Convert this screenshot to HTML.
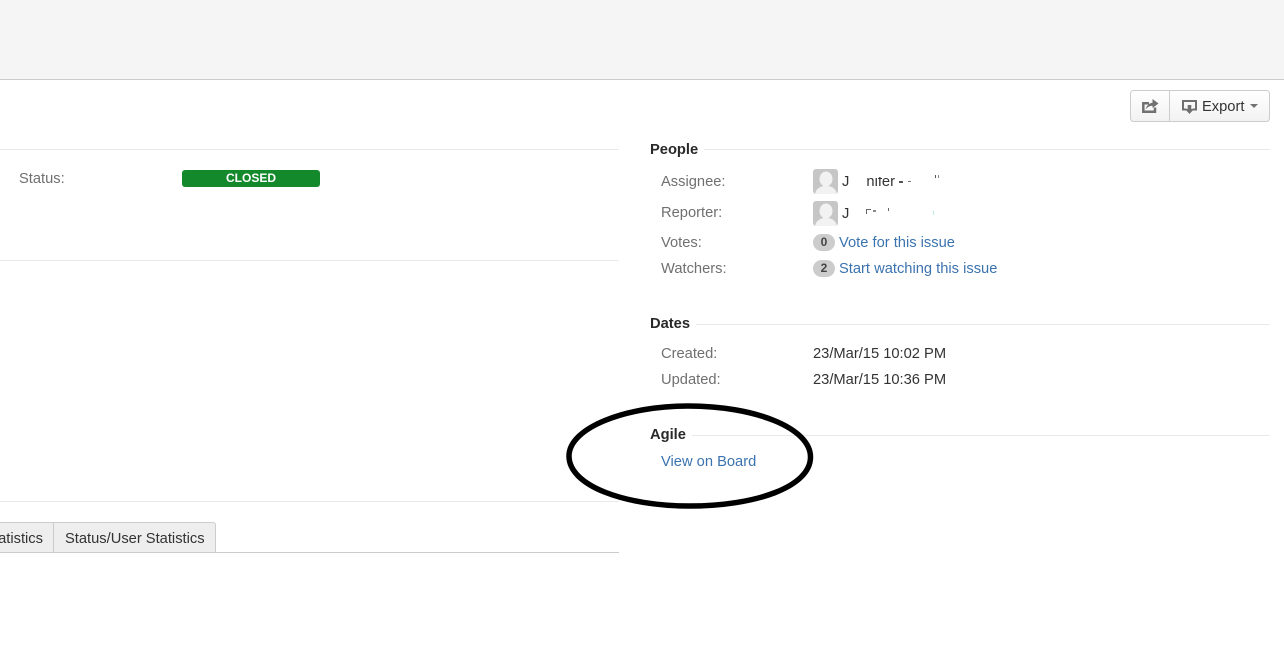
<!DOCTYPE html>
<html>
<head>
<meta charset="utf-8">
<style>
html,body{margin:0;padding:0;background:#fff}
body{width:1284px;height:648px;position:relative;overflow:hidden;font-family:"Liberation Sans",Arial,sans-serif;font-size:14.7px;color:#333}
.a{position:absolute;white-space:nowrap;line-height:20px;margin-top:1px}
.hr{position:absolute;height:1px;background:#e9e9e9}
.lab{color:#707070}
.link{color:#3b73af}
.h{font-weight:bold;color:#292929}
.val{color:#333}
.badge{position:absolute;width:22px;height:17px;border-radius:8.500px;background:#ccc;color:#444;font-size:12px;font-weight:bold;line-height:17px;text-align:center}
.av{position:absolute;width:25px;height:25px;border-radius:3px;overflow:hidden}
.clip{position:absolute;overflow:hidden;height:20px;line-height:20px;color:#333;white-space:nowrap;margin-top:1px}
</style>
</head>
<body>
<div style="position:absolute;left:0;top:0;width:1284px;height:79px;background:#f5f5f5;border-bottom:1px solid #ccc"></div>

<!-- toolbar buttons -->
<div style="position:absolute;left:1130px;top:90px;width:138px;height:30px;border:1px solid #ccc;border-radius:3.500px;background:linear-gradient(#fff,#f2f2f2)"></div>
<div style="position:absolute;left:1169px;top:91px;width:1px;height:30px;background:#ccc"></div>
<svg style="position:absolute;left:1141px;top:98px" width="18" height="16" viewBox="0 0 18 16">
<path d="M8 5.200H2.300V13.800H14V9.500" fill="none" stroke="#707070" stroke-width="2.500"/>
<path d="M4.500 11.500C5.500 7.500 8.500 5 11.500 4.800V1L17.500 5.500 11.500 10V7.800C9 7.800 6.500 9 4.500 11.500Z" fill="#707070"/>
</svg>
<svg style="position:absolute;left:1181px;top:99px" width="17" height="16" viewBox="0 0 17 16">
<path d="M5.500 10.500H2V2H15V10.500H11.500" fill="none" stroke="#707070" stroke-width="2"/>
<path d="M6.700 6H10.300V10H13L8.500 15 4 10H6.700Z" fill="#707070"/>
</svg>
<div class="a" style="left:1202px;top:96px;color:#333">Export</div>
<div style="position:absolute;left:1250px;top:104px;width:0;height:0;border-left:4px solid transparent;border-right:4px solid transparent;border-top:4px solid #707070"></div>

<!-- left column -->
<div class="hr" style="left:0;top:149px;width:619px"></div>
<div class="a lab" style="left:19px;top:168px">Status:</div>
<div style="position:absolute;left:182px;top:170px;width:138px;height:17px;background:#14892c;border-radius:3px;color:#fff;font-size:12px;font-weight:bold;line-height:16px;text-align:center">CLOSED</div>
<div class="hr" style="left:0;top:260px;width:619px"></div>
<div class="hr" style="left:0;top:501px;width:619px"></div>

<!-- tabs -->
<div style="position:absolute;left:0;top:552px;width:619px;height:1px;background:#ccc"></div>
<div style="position:absolute;left:0;top:522px;width:53px;height:29px;background:#eee;border-top:1px solid #ccc"></div>
<div style="position:absolute;left:53px;top:522px;width:161px;height:29px;background:#eee;border:1px solid #ccc;border-bottom:none;border-top-right-radius:3px"></div>
<div class="a" style="right:1241px;top:528px;color:#333">Statistics</div>
<div class="a" style="left:65px;top:528px;color:#333">Status/User Statistics</div>

<!-- People -->
<div class="a h" style="left:650px;top:139px">People</div>
<div class="hr" style="left:704px;top:149px;width:566px"></div>
<div class="a lab" style="left:661px;top:171px">Assignee:</div>
<div class="av" style="left:813px;top:169px"><svg width="25" height="25" viewBox="0 0 25 25"><rect width="25" height="25" fill="#c6c6c6"/><ellipse cx="13" cy="10" rx="6.500" ry="7.500" fill="#f2f2f2"/><path d="M2 25C3 20 6 18.500 10 17H16C20 18.500 23 20 24 25Z" fill="#f2f2f2"/></svg></div>
<div class="clip" style="left:842px;top:171px;width:7px;clip-path:inset(4px 0 3px 0)">J</div>
<div class="clip" style="left:851px;top:171px;width:44px;clip-path:inset(5px 0 5px 15px);text-align:right">nnifer</div>
<div style="position:absolute;left:899px;top:181px;width:4px;height:2px;background:#555"></div>
<div style="position:absolute;left:908px;top:181px;width:3px;height:1px;background:#777"></div>
<div style="position:absolute;left:935px;top:175px;width:1px;height:3px;background:#555"></div>
<div style="position:absolute;left:938px;top:175px;width:1px;height:3px;background:#888"></div>

<div class="a lab" style="left:661px;top:202px">Reporter:</div>
<div class="av" style="left:813px;top:201px"><svg width="25" height="25" viewBox="0 0 25 25"><rect width="25" height="25" fill="#c6c6c6"/><ellipse cx="13" cy="10" rx="6.500" ry="7.500" fill="#f2f2f2"/><path d="M2 25C3 20 6 18.500 10 17H16C20 18.500 23 20 24 25Z" fill="#f2f2f2"/></svg></div>
<div class="clip" style="left:842px;top:203px;width:7px;clip-path:inset(4px 0 3px 0)">J</div>
<div style="position:absolute;left:866px;top:209px;width:4px;height:4px;border-top:1px solid #666;border-left:1px solid #666"></div>
<div style="position:absolute;left:873px;top:210px;width:3px;height:2px;background:#888"></div>
<div style="position:absolute;left:888px;top:208px;width:1px;height:3px;background:#666"></div>
<div style="position:absolute;left:933px;top:211px;width:1px;height:4px;background:#bfeee8"></div>

<div class="a lab" style="left:661px;top:232px">Votes:</div>
<div class="badge" style="left:813px;top:234px">0</div>
<div class="a link" style="left:839px;top:232px">Vote for this issue</div>
<div class="a lab" style="left:661px;top:258px">Watchers:</div>
<div class="badge" style="left:813px;top:260px">2</div>
<div class="a link" style="left:839px;top:258px">Start watching this issue</div>

<!-- Dates -->
<div class="a h" style="left:650px;top:313px">Dates</div>
<div class="hr" style="left:696px;top:324px;width:574px"></div>
<div class="a lab" style="left:661px;top:343px">Created:</div>
<div class="a val" style="left:813px;top:343px">23/Mar/15 10:02 PM</div>
<div class="a lab" style="left:661px;top:369px">Updated:</div>
<div class="a val" style="left:813px;top:369px">23/Mar/15 10:36 PM</div>

<!-- Agile -->
<div class="a h" style="left:650px;top:424px">Agile</div>
<div class="hr" style="left:692px;top:435px;width:578px"></div>
<div class="a link" style="left:661px;top:451px">View on Board</div>

<!-- hand-drawn ellipse -->
<svg style="position:absolute;left:0;top:0;pointer-events:none" width="1284" height="648">
<path d="M569 456C569 428 625 406 688 406C755 406 810.500 428 810.500 457C810.500 487 755 506 690 506C625 506 569 486 569 456Z" fill="none" stroke="#000" stroke-width="5.500"/>
</svg>
</body>
</html>
